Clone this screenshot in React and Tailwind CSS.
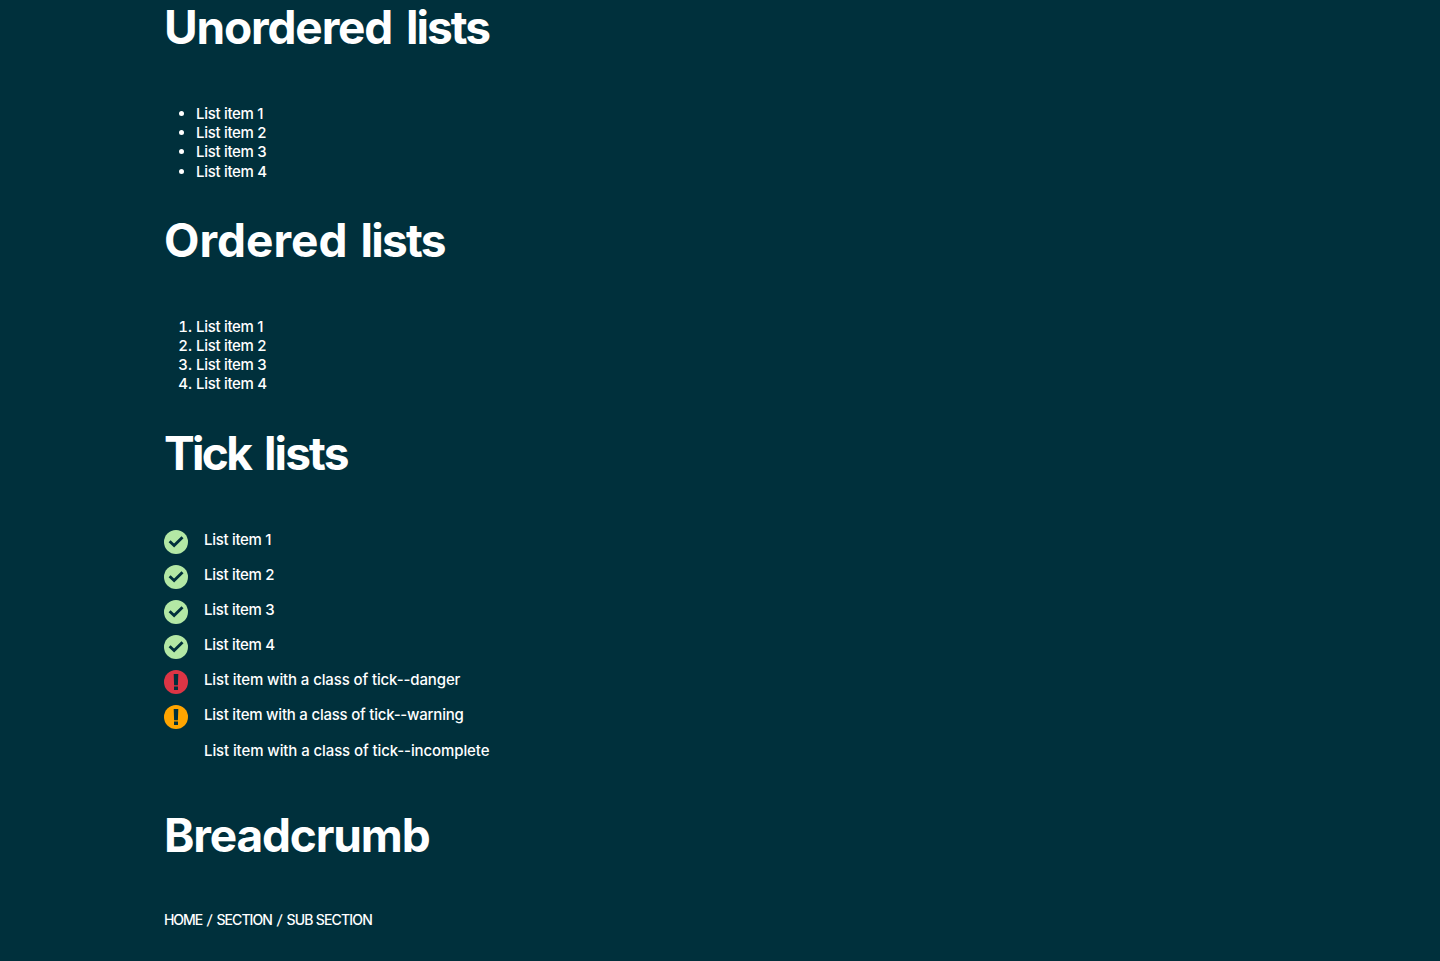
import React from "react";

const items = ["List item 1", "List item 2", "List item 3", "List item 4"];

function Heading({ children }) {
  return (
    <h2 className="h-[54px] text-[46px] leading-[55px] font-[650] whitespace-nowrap">
      {children}
    </h2>
  );
}

function Icon({ type }) {
  if (type === "incomplete") return <span className="size-6 shrink-0" />;
  const fill = { tick: "#b3e8a5", danger: "#dc3545", warning: "#ffa500" }[type];
  return (
    <svg className="size-6 shrink-0" viewBox="0 0 24 24">
      <circle cx="12" cy="12" r="12" fill={fill} />
      {type === "tick" ? (
        <path d="M5.6 11.3 10.1 15.5 18.5 7.2" fill="none" stroke="#00303c" strokeWidth="2.9" />
      ) : (
        <path d="M9.7 4h4.6l-.4 11.2h-3.8zM10 16.6h4V20h-4z" fill="#00303c" />
      )}
    </svg>
  );
}

const ticks = [
  ...items.map((text) => ({ text, type: "tick", spacing: "tracking-[-0.3px]" })),
  { text: "List item with a class of tick--danger", type: "danger", spacing: "tracking-[-0.12px]" },
  { text: "List item with a class of tick--warning", type: "warning", spacing: "tracking-[-0.22px]" },
  { text: "List item with a class of tick--incomplete", type: "incomplete", spacing: "tracking-[-0.1px]" },
];

export default function App() {
  return (
    <main className="h-[961px] overflow-hidden bg-[#00303c] pl-[164px] font-['Inter',sans-serif] text-[15px] leading-[19.2px] font-medium text-white">
      <section className="h-[213px]">
        <Heading>
          <span className="tracking-[-1.15px]">Unordered</span>{" "}
          <span className="ml-[3px] tracking-[-2px]">lists</span>
        </Heading>
        <ul className="mt-[50px] list-disc pl-8">
          {items.map((t) => (
            <li key={t}><span className="tracking-[-0.3px]">{t}</span></li>
          ))}
        </ul>
      </section>
      <section className="h-[213px]">
        <Heading>
          <span>Ordered</span>{" "}
          <span className="ml-[2px] tracking-[-1.7px]">lists</span>
        </Heading>
        <ol className="mt-[49.8px] list-decimal pl-8">
          {items.map((t) => (
            <li key={t}><span className="tracking-[-0.3px]">{t}</span></li>
          ))}
        </ol>
      </section>
      <section className="h-[382px]">
        <Heading>
          <span className="tracking-[-2.7px]">Tick</span>{" "}
          <span className="ml-[3px] tracking-[-1.9px]">lists</span>
        </Heading>
        <ul className="mt-[50px]">
          {ticks.map((t) => (
            <li key={t.text} className="flex h-[35.1px] items-start gap-4 whitespace-nowrap">
              <Icon type={t.type} />
              <span className={t.spacing}>{t.text}</span>
            </li>
          ))}
        </ul>
      </section>
      <section>
        <Heading>
          <span className="tracking-[-1.15px]">Breadcrumb</span>
        </Heading>
        <nav className="mt-[48px] flex text-[14px] leading-5">
          <a className="w-[42.5px] tracking-[-1.05px]">HOME</a>
          <span className="w-[10px] -skew-x-6">/</span>
          <a className="w-[60px] tracking-[-0.95px]">SECTION</a>
          <span className="w-[10px] -skew-x-6">/</span>
          <a className="tracking-[-0.8px]">SUB SECTION</a>
        </nav>
      </section>
    </main>
  );
}
